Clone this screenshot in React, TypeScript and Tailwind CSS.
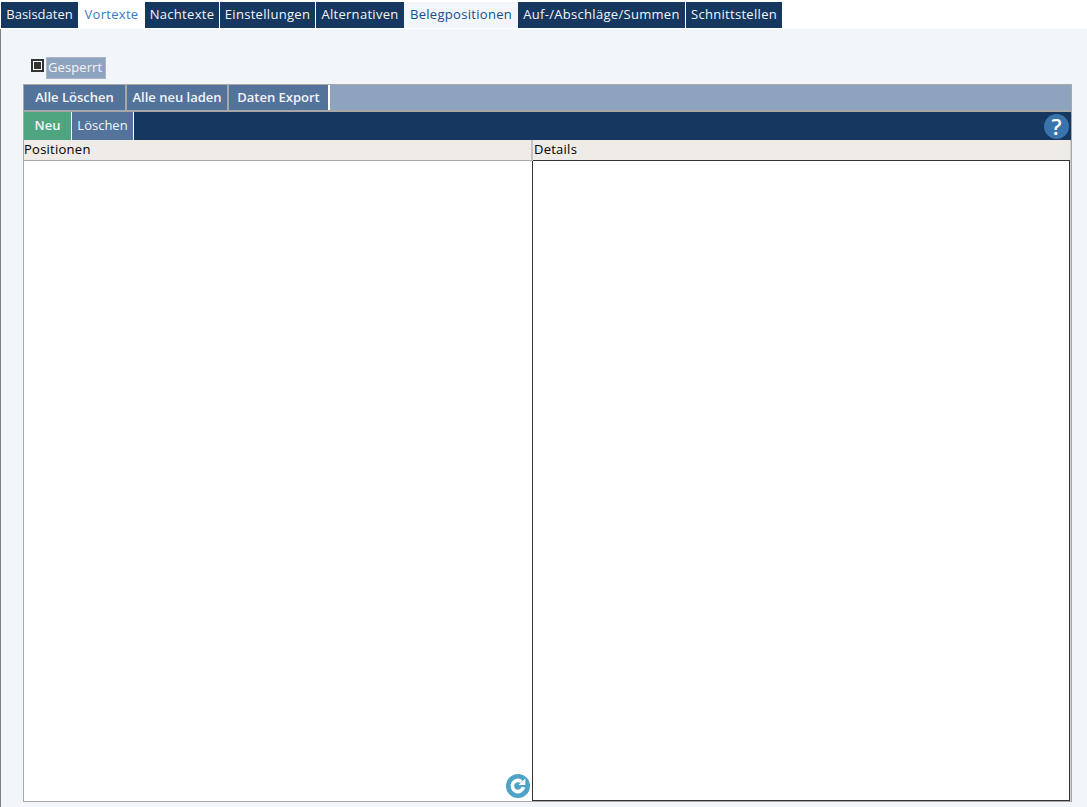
const tabs = [
  { label: "Basisdaten", w: "w-[77px]", cls: "bg-[#16375f] text-[#f2f5fa] tracking-normal" },
  { label: "Vortexte", w: "w-[67px]", cls: "bg-white text-[#3b7ac4]" },
  { label: "Nachtexte", w: "w-[75px]", cls: "bg-[#16375f] text-[#f2f5fa] border-r border-white" },
  { label: "Einstellungen", w: "w-[96px]", cls: "bg-[#16375f] text-[#f2f5fa] border-r border-white" },
  { label: "Alternativen", w: "w-[88px]", cls: "bg-[#16375f] text-[#f2f5fa]" },
  { label: "Belegpositionen", w: "w-[114px]", cls: "bg-[#f2f5fa] text-[#14508c]" },
  { label: "Auf-/Abschläge/Summen", w: "w-[168px]", cls: "bg-[#16375f] text-[#f2f5fa] border-r border-white" },
  { label: "Schnittstellen", w: "w-[96px]", cls: "bg-[#16375f] text-[#f2f5fa]" },
];

const App = () => {
  return (
    <div className="flex h-[807px] w-[1087px] flex-col overflow-hidden bg-white font-['Open_Sans','Noto_Sans',sans-serif] text-[13px]">
      <div className="flex h-[29px] pl-px pt-[2px] tracking-[0.3px]">
        {tabs.map((tab) => (
          <div key={tab.label} className={`flex h-[26px] items-center justify-center ${tab.w} ${tab.cls}`}>
            {tab.label}
          </div>
        ))}
      </div>

      <div className="flex flex-1 flex-col border-l border-[#7f7f7f] bg-[#f2f5fa] pl-[22px]">
        <div className="flex h-[55px] items-start pl-[8px] pt-[28px]">
          <div className="mt-[2px] flex h-[13px] w-[13px] items-center justify-center border-2 border-[#333] bg-white">
            <div className="h-[7px] w-[7px] bg-[#333]" />
          </div>
          <div className="ml-[2px] flex h-[22px] w-[60px] items-center border border-[#aab4c2] bg-[#8ea3be] pl-[1px] tracking-[0.1px] text-[#f2f5fa]">
            Gesperrt
          </div>
        </div>

        <div className="flex h-[718px] w-[1049px] flex-col border border-[#a8a8a8]">
          <div className="flex h-[27px] border-b-2 border-[#a8a8a8] bg-[#8ea3be] font-semibold text-[#f2f5fa]">
            <div className="flex w-[103px] items-center justify-center border-r-2 border-[#a8a8a8] bg-[#54739b]">Alle Löschen</div>
            <div className="flex w-[102px] items-center justify-center border-r-2 border-[#a8a8a8] bg-[#54739b]">Alle neu laden</div>
            <div className="flex w-[101px] items-center justify-center border-r-2 border-white bg-[#54739b]">Daten Export</div>
          </div>

          <div className="flex h-[28px] items-stretch bg-[#16375f] text-[#f2f5fa]">
            <div className="flex w-[48px] items-center justify-center border-r border-white bg-[#4ea57f] font-semibold">Neu</div>
            <div className="flex w-[62px] items-center justify-center border-r border-white bg-[#54739b]">Löschen</div>
            <div className="ml-auto mr-[2px] flex h-[25px] w-[25px] items-center justify-center self-center rounded-full bg-[#3a74ad] text-[22px] font-semibold leading-none text-white">
              ?
            </div>
          </div>

          <div className="flex flex-1 flex-col border-r border-[#d0d0d0]">
            <div className="flex h-[21px] bg-[#efebe6] tracking-[0.25px] text-black">
              <div className="flex w-[509px] items-center border-b border-r-2 border-[#a8a8a8] border-r-[#c4c4c4]">Positionen</div>
              <div className="flex flex-1 items-center border-b border-[#333] pl-px">Details</div>
            </div>

            <div className="flex flex-1">
              <div className="relative w-[508px] bg-white">
                <svg className="absolute bottom-[3px] right-[2px] h-[24px] w-[24px]" viewBox="0 0 24 24">
                  <circle cx="12" cy="12" r="12" fill="#4fa3c7" />
                  <path d="M17.4 13.2a5.6 5.6 0 1 1-2-5.6" fill="none" stroke="#fff" strokeWidth="3.6" />
                  <path d="M12.5 11l6.8 0 0-6.6z" fill="#fff" />
                </svg>
              </div>
              <div className="flex-1 border-x border-b border-[#333] bg-white" />
            </div>
          </div>
        </div>
      </div>
    </div>
  );
};

export default App;
